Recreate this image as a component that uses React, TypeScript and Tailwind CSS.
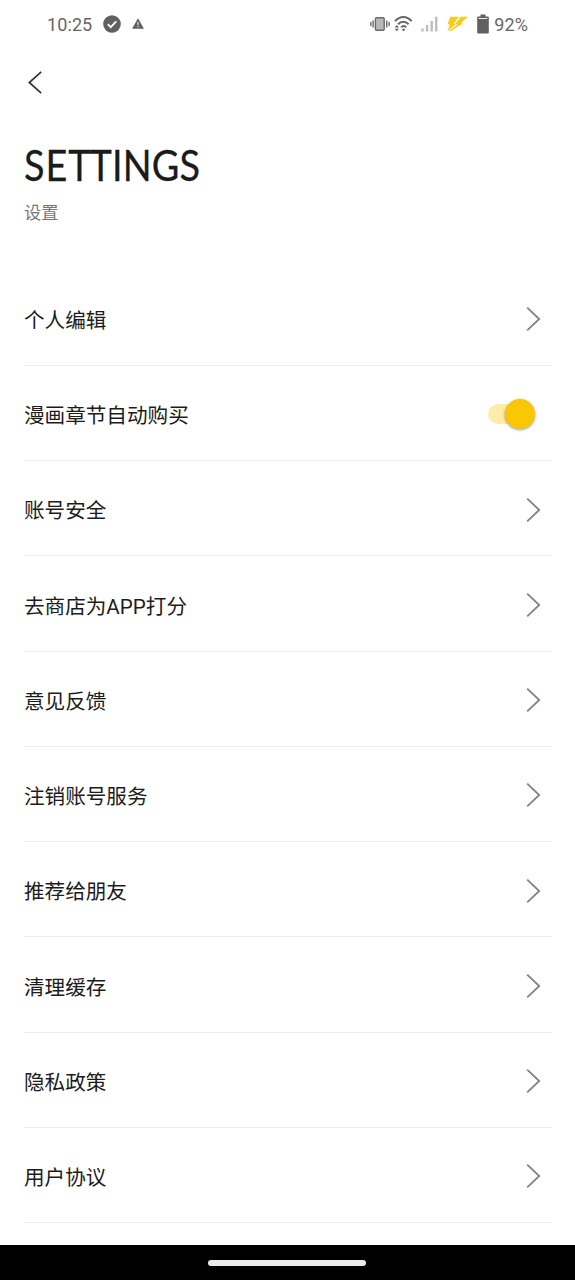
import type { ReactNode } from "react";

type SettingItem = {
  label: string;
  toggle?: boolean;
};

const settings: SettingItem[] = [
  { label: "个人编辑" },
  { label: "漫画章节自动购买", toggle: true },
  { label: "账号安全" },
  { label: "去商店为APP打分" },
  { label: "意见反馈" },
  { label: "注销账号服务" },
  { label: "推荐给朋友" },
  { label: "清理缓存" },
  { label: "隐私政策" },
  { label: "用户协议" },
];

function StatusBar() {
  return (
    <div className="flex h-12 items-center justify-between pr-[47px] pl-[47px] font-[Roboto,sans-serif] text-[18px] text-[#666]">
      <div className="flex items-center">
        <span className="w-[55.5px] tracking-[0.1px]">10:25</span>
        <svg width="18" height="18" viewBox="0 0 18 18" aria-hidden>
          <circle cx="9" cy="9" r="8.8" fill="#606060" />
          <path d="M4.8 9.2l2.9 2.9 5.6-5.8" fill="none" stroke="#fff" strokeWidth="1.8" />
        </svg>
        <svg className="-mt-[2px] ml-[11px]" width="12" height="11" viewBox="0 0 12 11" aria-hidden>
          <path d="M6 .2L11.9 10.7H.1z" fill="#606060" />
          <path d="M6 4v3.2M6 8.1v1.2" stroke="#fff" strokeWidth="1" />
        </svg>
      </div>
      <div className="flex items-center">
        {/* vibrate */}
        <svg className="-mt-[1px]" width="20" height="16" viewBox="0 0 20 16" fill="none" stroke="#6a6a6a" aria-hidden>
          <rect x="5.4" y="1.7" width="8.8" height="12.6" rx="1" fill="#b9b9b9" strokeWidth="1.4" />
          <path d="M3.1 4.5v7M16.7 4.5v7M.9 6v4M19.1 6v4" strokeWidth="1.4" />
        </svg>
        {/* wifi with traffic arrows */}
        <svg className="-mt-[1px] ml-[4px]" width="19" height="16" viewBox="0 0 19 16" fill="none" aria-hidden>
          <path
            d="M1 5.2C6-.4 13-.4 17.6 5.2M4 8.2c3.2-3.4 7.4-3.4 10.6 0M7.2 11.2c1.6-1.7 3.4-1.7 5 0"
            stroke="#666"
            strokeWidth="2"
          />
          <circle cx="9.6" cy="13.7" r="1.3" fill="#666" />
          <path d="M.6 11.4L2.8 8.9l2.2 2.5zM.6 12.7l2.2 2.5 2.2-2.5z" fill="#666" />
        </svg>
        {/* signal strength */}
        <svg className="-mt-[1px] ml-[8px]" width="17" height="16" viewBox="0 0 17 16" fill="#bdbdbd" aria-hidden>
          <path d="M.3 12.5h2.4V15.5H.3zM4.9 9h2.4v6.5H4.9zM9.5 5h2.4v10.5H9.5zM14 .8h2.4v14.7H14z" />
        </svg>
        {/* app notification bolt */}
        <svg className="-mt-[1px] ml-[9px]" width="21" height="16" viewBox="0 0 21 16" fill="#f5cc1d" aria-hidden>
          <path d="M3.2.7h8.8L6.8 7.4 9 7.9.6 15 2.8 8.6.6 8.2z" />
          <path d="M13.8.7h7L14 7.1l2 .4L3.2 15.2l-1.6-.3L10.4 8.5l-2-.7z" />
        </svg>
        <svg className="-mt-[1px] ml-[9px]" width="12" height="20" viewBox="0 0 12 20" fill="#606060" aria-hidden>
          <path d="M3.5.5h5v2H11a.8.8 0 0 1 .8.8v15.2a1 1 0 0 1-1 1H1.2a1 1 0 0 1-1-1V3.3a.8.8 0 0 1 .8-.8h2.5z" />
          <path d="M1.6 4.5h8.8" stroke="#eee" strokeWidth="1" />
        </svg>
        <span className="ml-[5px] tracking-[0.1px]">92%</span>
      </div>
    </div>
  );
}

function ChevronRight() {
  return (
    <svg
      className="mr-[11px]"
      width="15"
      height="26"
      viewBox="0 0 15 26"
      fill="none"
      stroke="#868686"
      strokeWidth="1.9"
      aria-hidden
    >
      <path d="M1.2 1.6L13.2 13 1.2 24.4" />
    </svg>
  );
}

function Toggle() {
  return (
    <button
      type="button"
      role="switch"
      aria-checked="true"
      className="mr-[17px] flex h-5 w-[47px] items-center justify-end rounded-full bg-[#feeca8]"
    >
      <span className="size-[30px] shrink-0 rounded-full bg-[#fac705] shadow-[0_1px_3px_rgba(0,0,0,0.4)]" />
    </button>
  );
}

function Row({ label, children }: { label: string; children: ReactNode }) {
  return (
    <li className="flex h-[95.25px] items-center justify-between border-b border-[#ececec] pt-[3px]">
      <span className="pt-[4px] text-[20.6px] leading-none text-[#1c1c1c]">{label}</span>
      {children}
    </li>
  );
}

export default function App() {
  return (
    <div className="flex h-[1280px] w-[575px] flex-col overflow-hidden bg-white font-[Roboto,'Noto_Sans_CJK_SC',sans-serif]">
      <StatusBar />
      <header className="h-[222.6px] px-6">
        <button type="button" aria-label="返回" className="mt-[22px] ml-1 block">
          <svg width="15" height="25" viewBox="0 0 15 25" fill="none" stroke="#333" strokeWidth="1.7" aria-hidden>
            <path d="M13.2 1.8L1.3 12.5l11.9 10.7" />
          </svg>
        </button>
        <h1 className="mt-[45px] w-fit origin-left scale-x-[0.9] font-[Lato,sans-serif] text-[42px] leading-[50px] text-[#1b1b1b] [-webkit-text-stroke:0.3px_#1b1b1b]">
          <span className="tracking-[1px]">SE</span>
          <span className="tracking-[-1px]">T</span>T<span className="tracking-[0.2px]">INGS</span>
        </h1>
        <p className="mt-[13px] text-[17.2px] leading-[20px] text-[#777]">设置</p>
      </header>
      <ul className="mr-[23px] ml-6">
        {settings.map(({ label, toggle }) => (
          <Row key={label} label={label}>
            {toggle ? <Toggle /> : <ChevronRight />}
          </Row>
        ))}
      </ul>
      <div className="mt-auto flex h-[35px] items-center justify-center bg-black pr-[1px]">
        <div className="h-[6px] w-[158px] rounded-full bg-[#ebebeb]" />
      </div>
    </div>
  );
}
